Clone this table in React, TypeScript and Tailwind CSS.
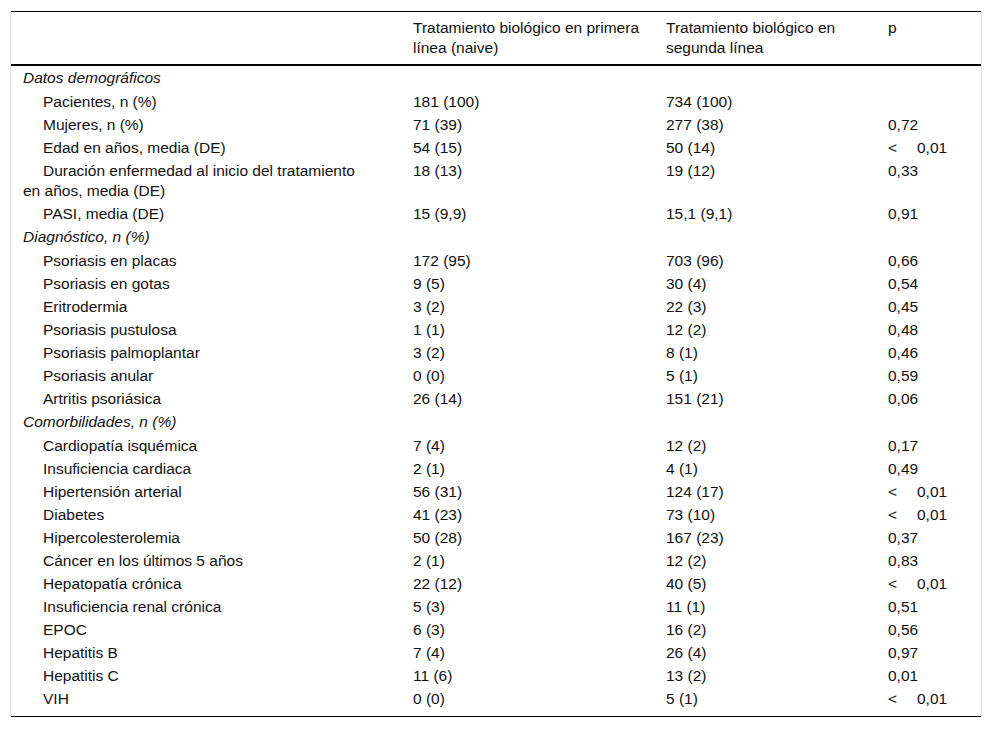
type Row =
  | { kind: "section"; label: string }
  | { kind: "item"; label: string; a: string; b: string; p: string };

const ROWS: Row[] = [
  { kind: "section", label: "Datos demográficos" },
  { kind: "item", label: "Pacientes, n (%)", a: "181 (100)", b: "734 (100)", p: "" },
  { kind: "item", label: "Mujeres, n (%)", a: "71 (39)", b: "277 (38)", p: "0,72" },
  { kind: "item", label: "Edad en años, media (DE)", a: "54 (15)", b: "50 (14)", p: "<0,01" },
  {
    kind: "item",
    label: "Duración enfermedad al inicio del tratamiento en años, media (DE)",
    a: "18 (13)",
    b: "19 (12)",
    p: "0,33",
  },
  { kind: "item", label: "PASI, media (DE)", a: "15 (9,9)", b: "15,1 (9,1)", p: "0,91" },
  { kind: "section", label: "Diagnóstico, n (%)" },
  { kind: "item", label: "Psoriasis en placas", a: "172 (95)", b: "703 (96)", p: "0,66" },
  { kind: "item", label: "Psoriasis en gotas", a: "9 (5)", b: "30 (4)", p: "0,54" },
  { kind: "item", label: "Eritrodermia", a: "3 (2)", b: "22 (3)", p: "0,45" },
  { kind: "item", label: "Psoriasis pustulosa", a: "1 (1)", b: "12 (2)", p: "0,48" },
  { kind: "item", label: "Psoriasis palmoplantar", a: "3 (2)", b: "8 (1)", p: "0,46" },
  { kind: "item", label: "Psoriasis anular", a: "0 (0)", b: "5 (1)", p: "0,59" },
  { kind: "item", label: "Artritis psoriásica", a: "26 (14)", b: "151 (21)", p: "0,06" },
  { kind: "section", label: "Comorbilidades, n (%)" },
  { kind: "item", label: "Cardiopatía isquémica", a: "7 (4)", b: "12 (2)", p: "0,17" },
  { kind: "item", label: "Insuficiencia cardiaca", a: "2 (1)", b: "4 (1)", p: "0,49" },
  { kind: "item", label: "Hipertensión arterial", a: "56 (31)", b: "124 (17)", p: "<0,01" },
  { kind: "item", label: "Diabetes", a: "41 (23)", b: "73 (10)", p: "<0,01" },
  { kind: "item", label: "Hipercolesterolemia", a: "50 (28)", b: "167 (23)", p: "0,37" },
  { kind: "item", label: "Cáncer en los últimos 5 años", a: "2 (1)", b: "12 (2)", p: "0,83" },
  { kind: "item", label: "Hepatopatía crónica", a: "22 (12)", b: "40 (5)", p: "<0,01" },
  { kind: "item", label: "Insuficiencia renal crónica", a: "5 (3)", b: "11 (1)", p: "0,51" },
  { kind: "item", label: "EPOC", a: "6 (3)", b: "16 (2)", p: "0,56" },
  { kind: "item", label: "Hepatitis B", a: "7 (4)", b: "26 (4)", p: "0,97" },
  { kind: "item", label: "Hepatitis C", a: "11 (6)", b: "13 (2)", p: "0,01" },
  { kind: "item", label: "VIH", a: "0 (0)", b: "5 (1)", p: "<0,01" },
];

function PValue({ value }: { value: string }) {
  if (value.startsWith("<")) {
    return (
      <span className="inline-flex">
        <span className="w-[29px]">&lt;</span>
        <span>{value.slice(1)}</span>
      </span>
    );
  }
  return <>{value}</>;
}

const cell = "align-top pl-3 pr-2 py-[1.5px] [tr:last-child>&]:pb-[7px]";

export default function App() {
  return (
    <div
      className="bg-white min-h-screen pt-[11px] px-[10px] text-[15.5px] leading-[20px] text-[#111]"
      style={{ fontFamily: '"Liberation Sans", Arial, sans-serif' }}
    >
      <div className="border-x border-[#e6e6e6] w-[972px]">
        <table className="w-full border-collapse table-fixed">
          <colgroup>
            <col className="w-[390px]" />
            <col className="w-[253px]" />
            <col className="w-[222px]" />
            <col />
          </colgroup>
          <thead>
            <tr className="border-t border-black border-b-2">
              <th className="align-top pl-3 pr-2 font-normal text-left py-[6px]" />
              <th className="align-top pl-3 pr-2 font-normal text-left py-[6px]">
                Tratamiento biológico en primera línea (naive)
              </th>
              <th className="align-top pl-3 pr-2 font-normal text-left py-[6px]">
                Tratamiento biológico en segunda línea
              </th>
              <th className="align-top pl-3 pr-2 font-normal text-left py-[6px]">p</th>
            </tr>
          </thead>
          <tbody className="border-b border-black">
            {ROWS.map((r, i) =>
              r.kind === "section" ? (
                <tr key={i}>
                  <td colSpan={4} className="align-top pl-3 pr-2 italic py-[2px]">
                    {r.label}
                  </td>
                </tr>
              ) : (
                <tr key={i}>
                  <td className={`${cell} pr-[28px] indent-[20px]`}>{r.label}</td>
                  <td className={cell}>{r.a}</td>
                  <td className={cell}>{r.b}</td>
                  <td className={cell}>
                    <PValue value={r.p} />
                  </td>
                </tr>
              ),
            )}
          </tbody>
        </table>
      </div>
    </div>
  );
}
